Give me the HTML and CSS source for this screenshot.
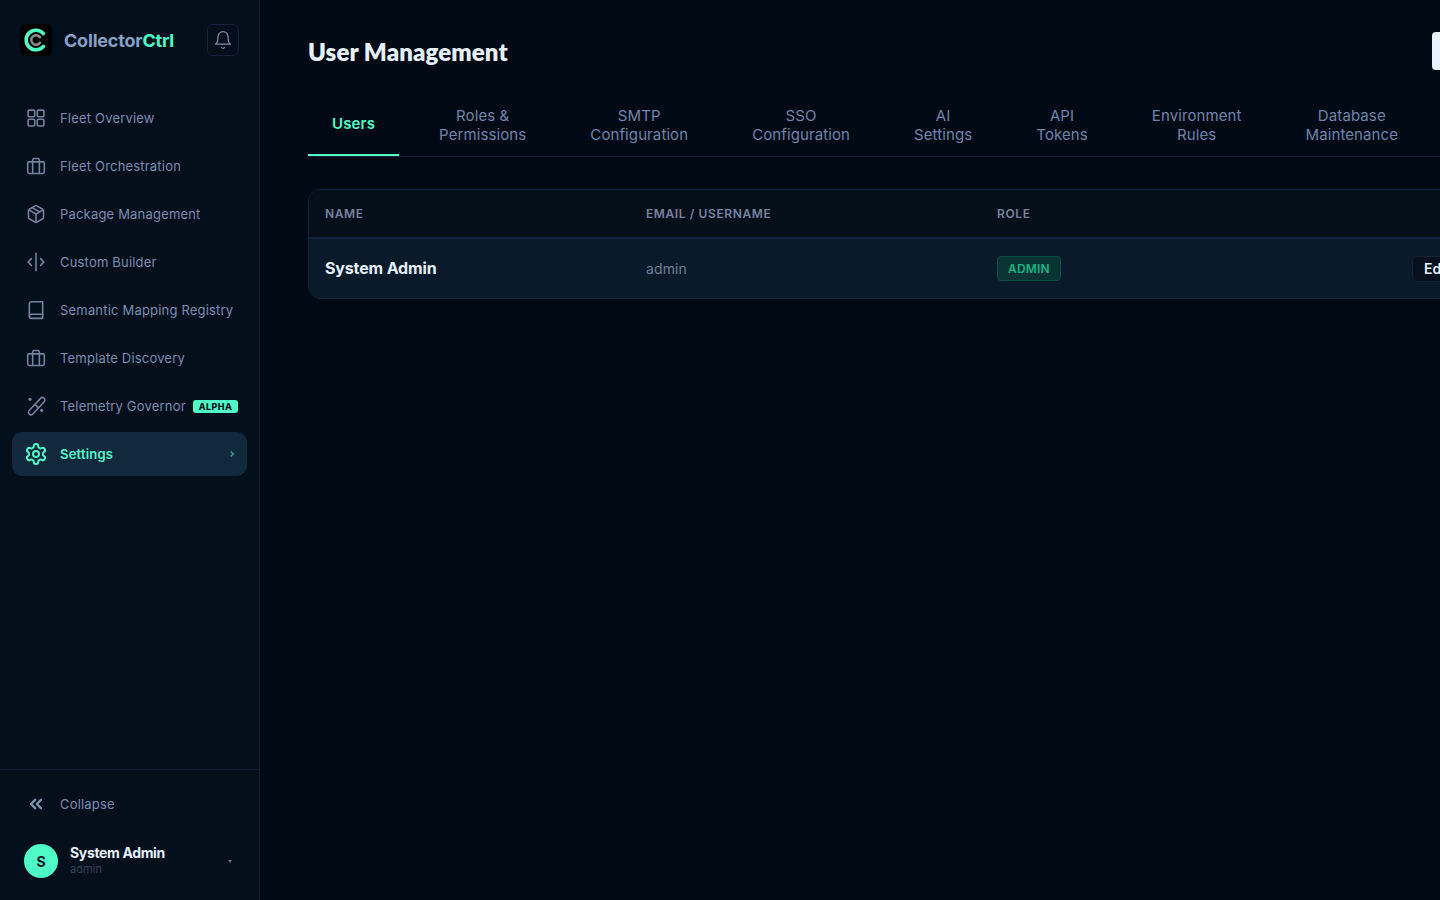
FILE: index.html
```html
<!DOCTYPE html>
<html lang="en">
<head>
<meta charset="utf-8">
<title>User Management</title>
<link rel="stylesheet" href="styles.css">
</head>
<body>
<div class="app">
  <aside class="sidebar">
    <div class="brand">
      <svg class="logo" width="32" height="32" viewBox="0 0 32 32" fill="none">
        <rect width="32" height="32" rx="6" fill="#000"/>
        <path d="M23.4 9.6a9.8 9.8 0 1 0 0 12.8" stroke="#4ffcc8" stroke-width="3.6" stroke-linecap="round"/>
        <path d="M20 13.2a4.8 4.8 0 1 0 0 5.6" stroke="#8d8d8d" stroke-width="2.4" stroke-linecap="round"/>
      </svg>
      <span class="brand-name">Collector<span class="accent">Ctrl</span></span>
      <button class="bell" aria-label="Notifications">
        <svg class="ic-bell" viewBox="0 0 24 24"><path d="M6 8a6 6 0 0 1 12 0c0 7 3 9 3 9H3s3-2 3-9"/><path d="M10.3 21a1.94 1.94 0 0 0 3.4 0"/></svg>
      </button>
    </div>
    <nav class="nav">
      <a class="nav-item"><svg class="ic" viewBox="0 0 24 24"><rect x="2.5" y="2.5" width="8" height="8" rx="1.5"/><rect x="13.5" y="2.5" width="8" height="8" rx="1.5"/><rect x="2.5" y="13.5" width="8" height="8" rx="1.5"/><rect x="13.5" y="13.5" width="8" height="8" rx="1.5"/></svg><span>Fleet Overview</span></a>
      <a class="nav-item"><svg class="ic" viewBox="0 0 24 24"><rect x="2" y="7" width="20" height="14" rx="2"/><path d="M16 21V5a2 2 0 0 0-2-2h-4a2 2 0 0 0-2 2v16"/></svg><span>Fleet Orchestration</span></a>
      <a class="nav-item"><svg class="ic" viewBox="0 0 24 24"><path d="M21 8a2 2 0 0 0-1-1.73l-7-4a2 2 0 0 0-2 0l-7 4A2 2 0 0 0 3 8v8a2 2 0 0 0 1 1.73l7 4a2 2 0 0 0 2 0l7-4A2 2 0 0 0 21 16Z"/><path d="m3.3 7 8.7 5 8.7-5"/><path d="M12 22V12"/><path d="m7.5 4.3 9 5.2"/></svg><span>Package Management</span></a>
      <a class="nav-item"><svg class="ic" viewBox="0 0 24 24"><path d="m17.5 8 4 4-4 4"/><path d="m6.5 8-4 4 4 4"/><path d="M12 1.5v21"/></svg><span>Custom Builder</span></a>
      <a class="nav-item"><svg class="ic" viewBox="0 0 24 24"><path d="M4 19.5v-15A2.5 2.5 0 0 1 6.5 2H20v20H6.5A2.5 2.5 0 0 1 4 19.5"/><path d="M4 19.5A2.5 2.5 0 0 1 6.5 17H20"/></svg><span>Semantic Mapping Registry</span></a>
      <a class="nav-item"><svg class="ic" viewBox="0 0 24 24"><rect x="2" y="7" width="20" height="14" rx="2"/><path d="M16 21V5a2 2 0 0 0-2-2h-4a2 2 0 0 0-2 2v16"/></svg><span>Template Discovery</span></a>
      <a class="nav-item"><svg class="ic" viewBox="0 0 24 24"><g transform="translate(12.8 12.2) rotate(-47)"><rect x="-13" y="-3" width="26" height="6" rx="3"/><path d="M0-3V3"/></g><circle class="dot" cx="4.8" cy="4" r="1.9"/><circle class="dot" cx="18.8" cy="17.2" r="1.9"/></svg><span>Telemetry Governor</span><span class="alpha">ALPHA</span></a>
      <a class="nav-item active"><svg class="ic gear" viewBox="0 0 24 24"><path d="M12.22 2h-.44a2 2 0 0 0-2 2v.18a2 2 0 0 1-1 1.73l-.43.25a2 2 0 0 1-2 0l-.15-.08a2 2 0 0 0-2.73.73l-.22.38a2 2 0 0 0 .73 2.73l.15.1a2 2 0 0 1 1 1.72v.51a2 2 0 0 1-1 1.74l-.15.09a2 2 0 0 0-.73 2.73l.22.38a2 2 0 0 0 2.73.73l.15-.08a2 2 0 0 1 2 0l.43.25a2 2 0 0 1 1 1.73V20a2 2 0 0 0 2 2h.44a2 2 0 0 0 2-2v-.18a2 2 0 0 1 1-1.73l.43-.25a2 2 0 0 1 2 0l.15.08a2 2 0 0 0 2.73-.73l.22-.39a2 2 0 0 0-.73-2.73l-.15-.08a2 2 0 0 1-1-1.74v-.5a2 2 0 0 1 1-1.74l.15-.09a2 2 0 0 0 .73-2.73l-.22-.38a2 2 0 0 0-2.73-.73l-.15.08a2 2 0 0 1-2 0l-.43-.25a2 2 0 0 1-1-1.73V4a2 2 0 0 0-2-2"/><circle cx="12" cy="12" r="3"/></svg><span>Settings</span><svg class="chev" viewBox="0 0 24 24"><path d="m9 6 6 6-6 6"/></svg></a>
    </nav>
    <div class="side-foot">
      <a class="nav-item"><svg class="ic thick" viewBox="0 0 24 24"><path d="m11 17-5-5 5-5"/><path d="m18 17-5-5 5-5"/></svg><span>Collapse</span></a>
      <div class="user">
        <span class="avatar">S</span>
        <span class="user-text"><span class="user-name">System Admin</span><span class="user-role">admin</span></span>
        <span class="caret"></span>
      </div>
    </div>
  </aside>
  <main class="main">
    <div class="content">
      <header class="page-head">
        <h1 class="title">User Management</h1>
        <button class="primary" aria-label="Add user"></button>
      </header>
      <div class="tabs">
        <a class="tab active">Users</a>
        <a class="tab">Roles &amp;<br>Permissions</a>
        <a class="tab">SMTP<br>Configuration</a>
        <a class="tab">SSO<br>Configuration</a>
        <a class="tab">AI<br>Settings</a>
        <a class="tab">API<br>Tokens</a>
        <a class="tab">Environment<br>Rules</a>
        <a class="tab">Database<br>Maintenance</a>
      </div>
      <div class="table">
        <div class="row head">
          <div class="cell">NAME</div>
          <div class="cell">EMAIL / USERNAME</div>
          <div class="cell">ROLE</div>
          <div class="cell"></div>
        </div>
        <div class="row body">
          <div class="cell strong">System Admin</div>
          <div class="cell muted">admin</div>
          <div class="cell"><span class="badge">ADMIN</span></div>
          <div class="cell"><button class="edit">Edit</button></div>
        </div>
      </div>
    </div>
  </main>
</div>
</body>
</html>
```
FILE: styles.css
```css
* { box-sizing: border-box; }
html, body { margin: 0; height: 100%; overflow: hidden; }
body { background: #010a14; color: #e6f0fb; font-family: Inter, "Liberation Sans", sans-serif; }
.app { display: flex; height: 900px; width: 1440px; overflow: hidden; }
.sidebar { flex: 0 0 260px; min-width: 0; display: flex; flex-direction: column; background: #040f1c; border-right: 1px solid #0f1e30; }
.brand { display: flex; align-items: center; height: 48px; margin: 16px 20px 32px; }
.logo { flex: none; }
.brand-name { margin-left: 12px; font-size: 18px; font-weight: 700; color: #85a1c4; letter-spacing: -0.2px; flex: 1; }
.accent { color: #4ffcc8; }
.bell { width: 32px; height: 32px; display: flex; align-items: center; justify-content: center; padding: 0; background: transparent; border: 1px solid #14233c; border-radius: 6px; }
.ic-bell { width: 20px; height: 20px; fill: none; stroke: #7e8ba6; stroke-width: 1.5; stroke-linecap: round; stroke-linejoin: round; }
.nav { flex: 1; display: flex; flex-direction: column; gap: 4px; padding: 0 12px; }
.nav-item { display: flex; align-items: center; height: 44px; padding: 0 14px; gap: 14px; border-radius: 10px; font-size: 13px; letter-spacing: 0.19px; color: #7a8cb0; white-space: nowrap; }
.ic { flex: none; width: 20px; height: 20px; fill: none; stroke: #73829f; stroke-width: 1.9; stroke-linecap: round; stroke-linejoin: round; }
.ic .dot { fill: #73829f; stroke: none; }
.ic.thick { stroke-width: 2.8; stroke: #8291ae; }
.ic.gear { width: 24px; height: 24px; margin: 0 -2px; stroke-width: 2; }
.alpha { flex: none; margin-left: -7px; padding: 0 6px; height: 13px; line-height: 13px; font-size: 9px; font-weight: 800; letter-spacing: 0.4px; color: #04121c; background: #4ffcc8; border-radius: 3px; }
.nav-item.active { background: #12293d; color: #4ffcc8; font-weight: 600; }
.nav-item.active .ic { stroke: #4ffcc8; }
.chev { margin-left: auto; margin-right: -4px; width: 10px; height: 10px; fill: none; stroke: #2f9f8b; stroke-width: 4; }
.side-foot { border-top: 1px solid #0f1e30; padding: 12px 12px 10px; display: flex; flex-direction: column; gap: 6px; }
.user { display: flex; align-items: center; gap: 12px; padding: 12px; }
.avatar { flex: none; width: 34px; height: 34px; border-radius: 50%; background: #4ffcc8; color: #04121c; display: flex; align-items: center; justify-content: center; font-size: 14px; font-weight: 700; }
.user-text { flex: 1; display: flex; flex-direction: column; }
.user-name { font-size: 14px; font-weight: 700; color: #e6f0fb; line-height: 16px; letter-spacing: -0.35px; }
.user-role { font-size: 11px; color: #35435c; line-height: 16px; letter-spacing: 0.1px; }
.caret { width: 0; height: 0; margin-right: 3px; border-left: 2.5px solid transparent; border-right: 2.5px solid transparent; border-top: 3px solid #65728c; }
.main { flex: 1; min-width: 0; overflow: hidden; }
.content { width: 1340px; padding: 32px 48px; }
.page-head { display: flex; justify-content: space-between; align-items: center; height: 38px; margin-bottom: 24px; }
.title { margin: 0; font-family: Lato, Inter, sans-serif; font-size: 24px; font-weight: 800; color: #e6f0fb; letter-spacing: 0.1px; }
.primary { height: 38px; width: 120px; flex: none; background: #e8f2ff; border: 0; border-radius: 4px; }
.tabs { display: flex; gap: 16px; border-bottom: 1px solid #14233c; height: 63px; }
.tab { display: flex; align-items: center; text-align: center; height: 62px; padding: 0 24px; font-size: 15px; line-height: 19px; letter-spacing: 0.1px; color: #6f83ab; }
.tab.active { color: #4ffcc8; font-weight: 600; letter-spacing: 0.15px; padding-bottom: 1px; border-bottom: 2px solid #4ffcc8; }
.table { margin-top: 32px; border: 1px solid #14233c; border-radius: 12px; overflow: hidden; width: 1180px; }
.row { display: grid; grid-template-columns: 321px 351px 415px auto; align-items: center; }
.cell { padding: 0 16px; }
.head { height: 49px; background: #050f1a; border-bottom: 2px solid #13233f; font-size: 12px; font-weight: 600; letter-spacing: 0.6px; color: #76839e; }
.body { height: 59px; background: #0b1a2a; }
.strong { font-size: 16px; font-weight: 700; letter-spacing: -0.15px; line-height: 20px; padding-bottom: 1px; color: #e6f0fb; }
.muted { font-size: 14px; letter-spacing: 0.1px; color: #6f7e98; }
.badge { display: inline-block; padding: 0 10px; height: 25px; line-height: 23px; border: 1px solid #0d4f44; border-radius: 4px; background: #0a3333; color: #10b981; font-size: 12px; font-weight: 600; letter-spacing: 0.2px; }
.edit { height: 26px; padding: 0 11px; background: #07111d; border: 1px solid #14233c; border-radius: 6px; color: #e6f0fb; font: 600 14px Inter, sans-serif; }
```
